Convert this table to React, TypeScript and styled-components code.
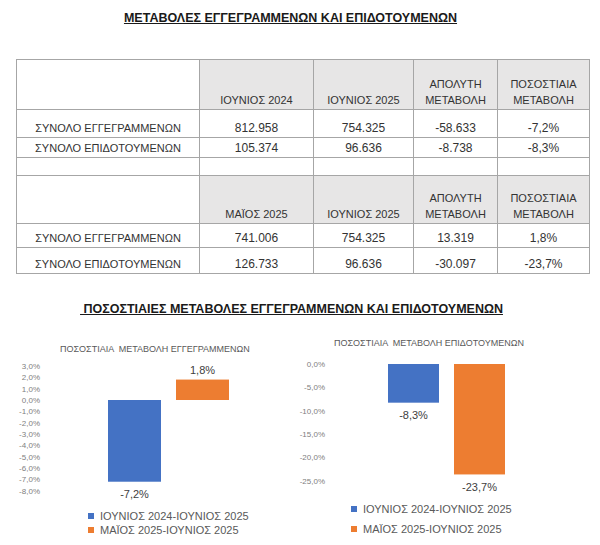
import React from "react";
import styled, { createGlobalStyle } from "styled-components";

const GlobalStyle = createGlobalStyle`
  html, body { margin: 0; padding: 0; background: #ffffff; }
  body { font-family: "Liberation Sans", Arial, sans-serif; }
`;

const Page = styled.div`
  width: 600px;
  height: 545px;
  overflow: hidden;
  background: #ffffff;
  color: #333333;
`;

const Heading = styled.h1<{ $mt: number; $shift: number }>`
  margin: ${(p) => p.$mt}px 0 0;
  padding-right: ${(p) => p.$shift}px;
  font-size: 12.5px;
  line-height: 14px;
  font-weight: 700;
  text-align: center;
  text-decoration: underline;
  color: #1a1a1a;
  white-space: pre;
`;

const Table = styled.table`
  margin: 34px 0 0 16px;
  width: 573px;
  border-collapse: collapse;
  table-layout: fixed;
`;

const Row = styled.tr<{ $h: number }>`
  height: ${(p) => p.$h}px;
`;

const Cell = styled.td<{ $head?: boolean; $num?: boolean }>`
  border: 1px solid #a6a6a6;
  padding: 0 2px 1px;
  vertical-align: bottom;
  text-align: center;
  font-size: ${(p) => (p.$num ? 12 : 11)}px;
  line-height: 16px;
  background: ${(p) => (p.$head ? "#e7e6e6" : "#ffffff")};
  color: #333333;
  white-space: nowrap;
`;

const ChartsRow = styled.div`
  display: flex;
`;

const ChartPanel = styled.div<{ $w: number }>`
  width: ${(p) => p.$w}px;
  display: flex;
  flex-direction: column;
`;

const ChartTitle = styled.div<{ $mt: number; $pl: number }>`
  margin-top: ${(p) => p.$mt}px;
  padding-left: ${(p) => p.$pl}px;
  font-size: 9px;
  line-height: 12px;
  color: #595959;
  white-space: pre;
`;

const PlotSvg = styled.svg<{ $mt: number }>`
  display: block;
  margin-top: ${(p) => p.$mt}px;
  font-family: "Liberation Sans", Arial, sans-serif;
`;

const Legend = styled.div<{ $mt: number; $pl: number; $gap: number }>`
  margin-top: ${(p) => p.$mt}px;
  padding-left: ${(p) => p.$pl}px;
  display: flex;
  flex-direction: column;
  gap: ${(p) => p.$gap}px;
`;

const LegendItem = styled.div`
  display: flex;
  align-items: center;
  gap: 6px;
  font-size: 11px;
  line-height: 14px;
  color: #595959;
  white-space: nowrap;
`;

const Swatch = styled.span<{ $color: string }>`
  width: 6px;
  height: 6px;
  background: ${(p) => p.$color};
  flex: none;
`;

const BLUE = "#4472c4";
const ORANGE = "#ed7d31";

type Bar = { x: number; w: number; value: number; color: string };

type ChartProps = {
  width: number;
  title: string;
  titleMt: number;
  titlePl: number;
  svgMt: number;
  height: number;
  zeroY: number;
  scale: number;
  ticks: number[];
  labelX: number;
  bars: Bar[];
  legendMt: number;
  legendPl: number;
  legendGap: number;
};

const fmt = (v: number) => v.toFixed(1).replace(".", ",") + "%";

const Chart: React.FC<ChartProps> = (c) => (
  <ChartPanel $w={c.width}>
    <ChartTitle $mt={c.titleMt} $pl={c.titlePl}>
      {c.title}
    </ChartTitle>
    <PlotSvg $mt={c.svgMt} width={c.width} height={c.height} viewBox={`0 0 ${c.width} ${c.height}`}>
      {c.ticks.map((t) => (
        <text
          key={t}
          x={c.labelX}
          y={c.zeroY - t * c.scale + 3}
          textAnchor="end"
          fontSize={8}
          fill="#808080"
        >
          {fmt(t)}
        </text>
      ))}
      {c.bars.map((b, i) => {
        const end = c.zeroY - b.value * c.scale;
        const top = Math.min(end, c.zeroY);
        const h = Math.abs(end - c.zeroY);
        const ly = b.value < 0 ? end + 16.5 : end - 6;
        return (
          <g key={i}>
            <rect x={b.x} y={top} width={b.w} height={h} fill={b.color} />
            <text x={b.x + b.w / 2} y={ly} textAnchor="middle" fontSize={11} fill="#404040">
              {fmt(b.value)}
            </text>
          </g>
        );
      })}
    </PlotSvg>
    <Legend $mt={c.legendMt} $pl={c.legendPl} $gap={c.legendGap}>
      <LegendItem>
        <Swatch $color={BLUE} />
        ΙΟΥΝΙΟΣ 2024-ΙΟΥΝΙΟΣ 2025
      </LegendItem>
      <LegendItem>
        <Swatch $color={ORANGE} />
        ΜΑΪΟΣ 2025-ΙΟΥΝΙΟΣ 2025
      </LegendItem>
    </Legend>
  </ChartPanel>
);

type DataRow = { label: string; a: string; b: string; abs: string; pct: string };

const HeaderRow: React.FC<{ h: number; a: string; b: string }> = ({ h, a, b }) => (
  <Row $h={h}>
    <Cell />
    <Cell $head>{a}</Cell>
    <Cell $head>{b}</Cell>
    <Cell $head>
      ΑΠΟΛΥΤΗ
      <br />
      ΜΕΤΑΒΟΛΗ
    </Cell>
    <Cell $head>
      ΠΟΣΟΣΤΙΑΙΑ
      <br />
      ΜΕΤΑΒΟΛΗ
    </Cell>
  </Row>
);

const DataLine: React.FC<{ h: number; r: DataRow }> = ({ h, r }) => (
  <Row $h={h}>
    <Cell>{r.label}</Cell>
    <Cell $num>{r.a}</Cell>
    <Cell $num>{r.b}</Cell>
    <Cell $num>{r.abs}</Cell>
    <Cell $num>{r.pct}</Cell>
  </Row>
);

const App: React.FC = () => (
  <Page>
    <GlobalStyle />
    <Heading $mt={11} $shift={19}>
      ΜΕΤΑΒΟΛΕΣ ΕΓΓΕΓΡΑΜΜΕΝΩΝ ΚΑΙ ΕΠΙΔΟΤΟΥΜΕΝΩΝ
    </Heading>
    <Table>
      <colgroup>
        <col style={{ width: 183 }} />
        <col style={{ width: 114 }} />
        <col style={{ width: 100 }} />
        <col style={{ width: 84 }} />
        <col style={{ width: 92 }} />
      </colgroup>
      <tbody>
        <HeaderRow h={50} a="ΙΟΥΝΙΟΣ 2024" b="ΙΟΥΝΙΟΣ 2025" />
        <DataLine h={28} r={{ label: "ΣΥΝΟΛΟ ΕΓΓΕΓΡΑΜΜΕΝΩΝ", a: "812.958", b: "754.325", abs: "-58.633", pct: "-7,2%" }} />
        <DataLine h={20} r={{ label: "ΣΥΝΟΛΟ ΕΠΙΔΟΤΟΥΜΕΝΩΝ", a: "105.374", b: "96.636", abs: "-8.738", pct: "-8,3%" }} />
        <Row $h={18}>
          <Cell />
          <Cell />
          <Cell />
          <Cell />
          <Cell />
        </Row>
        <HeaderRow h={48} a="ΜΑΪΟΣ 2025" b="ΙΟΥΝΙΟΣ 2025" />
        <DataLine h={24} r={{ label: "ΣΥΝΟΛΟ ΕΓΓΕΓΡΑΜΜΕΝΩΝ", a: "741.006", b: "754.325", abs: "13.319", pct: "1,8%" }} />
        <DataLine h={26} r={{ label: "ΣΥΝΟΛΟ ΕΠΙΔΟΤΟΥΜΕΝΩΝ", a: "126.733", b: "96.636", abs: "-30.097", pct: "-23,7%" }} />
      </tbody>
    </Table>
    <Heading $mt={28} $shift={17}>
      {"\u00a0ΠΟΣΟΣΤΙΑΙΕΣ ΜΕΤΑΒΟΛΕΣ ΕΓΓΕΓΡΑΜΜΕΝΩΝ ΚΑΙ ΕΠΙΔΟΤΟΥΜΕΝΩΝ"}
    </Heading>
    <ChartsRow>
      <Chart
        width={290}
        title={"ΠΟΣΟΣΤΙΑΙΑ  ΜΕΤΑΒΟΛΗ ΕΓΓΕΓΡΑΜΜΕΝΩΝ"}
        titleMt={27}
        titlePl={60}
        svgMt={4}
        height={145}
        zeroY={41}
        scale={11.35}
        ticks={[3, 2, 1, 0, -1, -2, -3, -4, -5, -6, -7, -8]}
        labelX={40}
        bars={[
          { x: 108, w: 53, value: -7.2, color: BLUE },
          { x: 176, w: 53, value: 1.8, color: ORANGE },
        ]}
        legendMt={5}
        legendPl={88}
        legendGap={0}
      />
      <Chart
        width={310}
        title={"ΠΟΣΟΣΤΙΑΙΑ  ΜΕΤΑΒΟΛΗ ΕΠΙΔΟΤΟΥΜΕΝΩΝ"}
        titleMt={21}
        titlePl={44}
        svgMt={2}
        height={148}
        zeroY={13}
        scale={4.66}
        ticks={[0, -5, -10, -15, -20, -25]}
        labelX={35}
        bars={[
          { x: 98, w: 51, value: -8.3, color: BLUE },
          { x: 164, w: 51, value: -23.7, color: ORANGE },
        ]}
        legendMt={3}
        legendPl={61}
        legendGap={6}
      />
    </ChartsRow>
  </Page>
);

export default App;
